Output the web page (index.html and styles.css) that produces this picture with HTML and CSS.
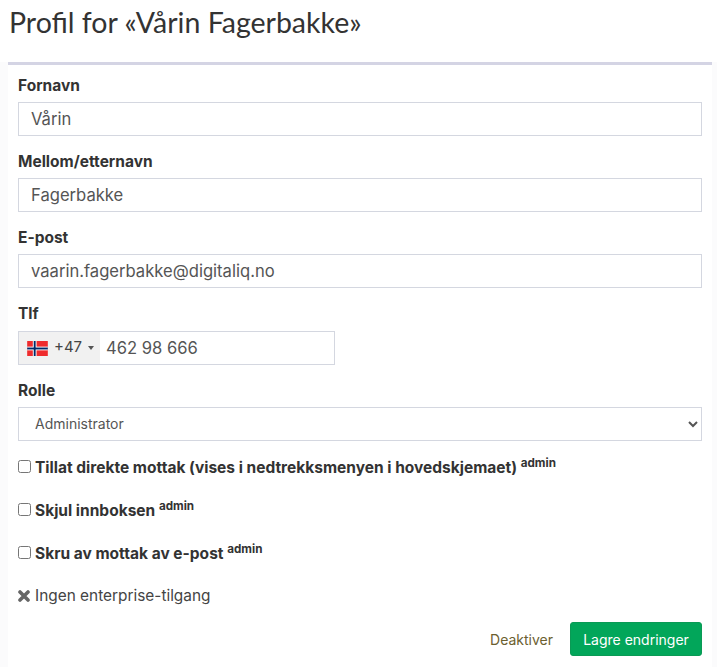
FILE: index.html
```html
<!DOCTYPE html>
<html lang="nb">
    <head>
        <meta charset="UTF-8" />
        <title>Profil</title>
        <link rel="stylesheet" href="styles.css">
    </head>
    <body>
        <h1>Profil for «Vårin Fagerbakke»</h1>
        <div class="page">
            <form class="panel">
                <div class="field">
                    <label for="fornavn">Fornavn</label>
                    <input class="control" type="text" id="fornavn" value="Vårin" />
                </div>
                <div class="field">
                    <label for="etternavn">Mellom/etternavn</label>
                    <input class="control" type="text" id="etternavn" value="Fagerbakke" />
                </div>
                <div class="field">
                    <label for="epost">E-post</label>
                    <input class="control" type="text" id="epost" value="vaarin.fagerbakke@digitaliq.no" />
                </div>
                <div class="field">
                    <label for="tlf">Tlf</label>
                    <div class="phone">
                        <div class="dial">
                            <svg class="flag" viewBox="0 0 22 16" width="21" height="15">
                                <rect width="22" height="16" fill="#ef2b2d" />
                                <rect x="6" width="4" height="16" fill="#fff" />
                                <rect y="6" width="22" height="4" fill="#fff" />
                                <rect x="7" width="2" height="16" fill="#002868" />
                                <rect y="7" width="22" height="2" fill="#002868" />
                            </svg>
                            <span class="code">+47</span>
                            <span class="caret"></span>
                        </div>
                        <input type="text" id="tlf" value="462 98 666" />
                    </div>
                </div>
                <div class="field last">
                    <label for="rolle">Rolle</label>
                    <select class="control role" id="rolle">
                        <option>Administrator</option>
                    </select>
                </div>
                <label class="check">
                    <input type="checkbox" />
                    <span>Tillat direkte mottak (vises i nedtrekksmenyen i hovedskjemaet) <sup>admin</sup></span>
                </label>
                <label class="check">
                    <input type="checkbox" />
                    <span>Skjul innboksen <sup>admin</sup></span>
                </label>
                <label class="check">
                    <input type="checkbox" />
                    <span>Skru av mottak av e-post <sup>admin</sup></span>
                </label>
                <p class="enterprise">
                    <svg class="cross" viewBox="0 0 12 12" width="12" height="12">
                        <path d="M2 2l8 8M10 2l-8 8" stroke="#666" stroke-width="3.6" stroke-linecap="round" />
                    </svg>
                    <span>Ingen enterprise-tilgang</span>
                </p>
                <div class="actions">
                    <a class="deactivate" href="#">Deaktiver</a>
                    <button type="button">Lagre endringer</button>
                </div>
            </form>
        </div>
    </body>
</html>
```

FILE: styles.css
```css
body {
    margin: 0;
    background: #fff;
    color: #333;
    font-family: Inter, sans-serif;
    font-size: 15px;
}
h1 {
    margin: 0;
    padding: 3px 0 21px 9px;
    font-family: Lato, sans-serif;
    font-size: 28.5px;
    font-weight: 400;
    line-height: 38px;
}
.page {
    padding: 0 5px 0 8px;
    background: #fbfbfc;
}
.panel {
    background: #fff;
    border-top: 3px solid #d4d4e4;
    padding: 10px 10px 11px;
}
.field {
    margin-bottom: 15px;
}
.field.last {
    margin-bottom: 4px;
}
.field label {
    display: block;
    font-size: 15.5px;
    font-weight: 700;
    line-height: 21px;
    margin-bottom: 6px;
}
.control {
    display: block;
    width: 100%;
    height: 34px;
    box-sizing: border-box;
    padding: 0 12px;
    border: 1px solid #d4d7e0;
    background: #fff;
    color: #555;
    font-family: Inter, sans-serif;
    font-size: 16.6px;
}
.control.role {
    font-size: 14px;
    border-radius: 0;
    padding-bottom: 2px;
}
.phone {
    display: flex;
    width: 317px;
    height: 34px;
    margin-top: 7px;
    box-sizing: border-box;
    border: 1px solid #d4d7e0;
}
.dial {
    display: flex;
    align-items: center;
    width: 81px;
    flex-shrink: 0;
    padding-left: 8px;
    box-sizing: border-box;
    background: #f1f1f1;
    color: #444;
    font-size: 15px;
}
.flag {
    margin-right: 6px;
}
.code {
    padding-bottom: 3px;
}
.caret {
    margin-left: 6px;
    border-left: 3px solid transparent;
    border-right: 3px solid transparent;
    border-top: 4px solid #555;
}
.phone input {
    flex: 1;
    min-width: 0;
    border: none;
    padding: 0 6px;
    color: #555;
    font-family: Inter, sans-serif;
    font-size: 16.6px;
}
.check {
    display: flex;
    align-items: center;
    height: 43px;
    font-size: 15.5px;
    font-weight: 700;
}
.check span {
    padding-top: 2px;
}
.check input {
    width: 13px;
    height: 13px;
    margin: 0 4px 0 0;
}
sup {
    font-size: 11.7px;
    line-height: 0;
}
.enterprise {
    display: flex;
    align-items: center;
    gap: 5px;
    margin: 0;
    height: 43px;
    color: #444;
    font-size: 15.4px;
}
.actions {
    display: flex;
    justify-content: flex-end;
    align-items: center;
    gap: 17px;
    margin-top: 5px;
}
.deactivate {
    color: #6b6030;
    font-size: 14px;
    text-decoration: none;
}
button {
    width: 132px;
    height: 34px;
    border: 1px solid #0a9a55;
    border-radius: 3px;
    background: #02a65a;
    color: #fff;
    font-family: Inter, sans-serif;
    font-size: 14px;
}
```
